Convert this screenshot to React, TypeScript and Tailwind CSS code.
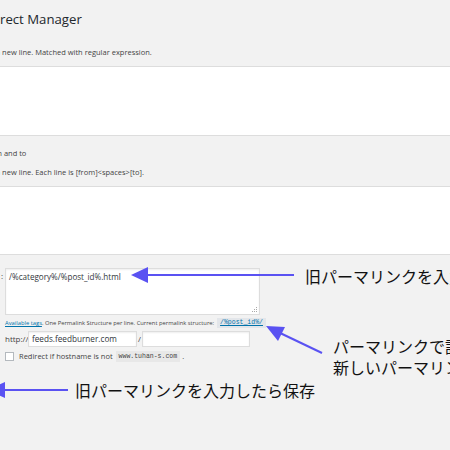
import React from "react";

const jp = "font-['Noto_Sans_CJK_JP',sans-serif]";

function Arrows() {
  return (
    <svg
      className="pointer-events-none absolute left-0 top-0"
      width="450"
      height="450"
      viewBox="0 0 450 450"
    >
      {/* top arrow */}
      <line x1="146" y1="275" x2="294" y2="275" stroke="#5a52f2" strokeWidth="2" />
      <polygon points="131,275 148,267 148,283" fill="#5a52f2" />
      {/* diagonal arrow */}
      <line x1="322" y1="353" x2="278" y2="332" stroke="#5a52f2" strokeWidth="2" />
      <polygon points="266,326 285,327 278,341" fill="#5a52f2" />
      {/* bottom arrow */}
      <line x1="2" y1="390" x2="68" y2="390" stroke="#5a52f2" strokeWidth="2" />
      <polygon points="-12,390 5,382 5,398" fill="#5a52f2" />
    </svg>
  );
}

export default function App() {
  return (
    <div className="relative h-[450px] w-[450px] overflow-hidden bg-[#f2f2f2] font-['Open_Sans',sans-serif] text-[#444]">
      {/* header */}
      <div className="h-[66px]">
        <h1 className="pt-[9px] text-[13.2px] leading-[20px] text-[#23282d]">rect Manager</h1>
        <p className="ml-[-4px] mt-[17px] whitespace-nowrap text-[7.5px] leading-[12px]">
          a new line. Matched with regular expression.
        </p>
      </div>

      <div className="h-[70px] border-y border-[#ddd] bg-white" />

      <div className="h-[50px] pt-[11px] text-[7.5px] leading-[12px]">
        <p className="ml-[-5px] whitespace-nowrap">m and to</p>
        <p className="ml-[-4px] mt-[7px] whitespace-nowrap">
          a new line. Each line is [from]&lt;spaces&gt;[to].
        </p>
      </div>

      <div className="h-[69px] border-y border-[#ddd] bg-white" />

      {/* permalink form */}
      <div className="pt-[13px]">
        <div className="flex">
          <span className="w-[5px] pl-[1px] pt-[3px] text-[8px] leading-[10px]">:</span>
          <div className="relative h-[47px] w-[255px] border border-[#ddd] bg-white px-[3px] pt-[2px] text-[8.1px] leading-[12px] text-[#32373c] shadow-[inset_0_1px_2px_rgba(0,0,0,0.07)]">
            /%category%/%post_id%.html
            <svg className="absolute bottom-[1px] right-[1px]" width="6" height="6" viewBox="0 0 6 6">
              <rect x="4" y="0" width="1" height="1" fill="#aaa" />
              <rect x="2" y="2" width="1" height="1" fill="#aaa" />
              <rect x="4" y="2" width="1" height="1" fill="#aaa" />
              <rect x="0" y="4" width="1" height="1" fill="#aaa" />
              <rect x="2" y="4" width="1" height="1" fill="#aaa" />
              <rect x="4" y="4" width="1" height="1" fill="#aaa" />
            </svg>
          </div>
        </div>

        <div className="mt-[3px] flex h-[10px] items-center pl-[5px] text-[5.8px] leading-[10px] whitespace-nowrap">
          <a className="text-[#0073aa] underline">Available tags</a>
          <span>. One Permalink Structure per line. Current permalink structure:</span>
          <code className="ml-[3px] bg-[#e3e6ea] px-[3px] font-['Liberation_Mono',monospace] text-[6.5px] leading-[10px] text-[#0073aa] underline">
            /%post_id%/
          </code>
        </div>

        <div className="mt-[3px] flex h-[16px] items-center pl-[5px] text-[8px]">
          <span className="w-[23px]">http://</span>
          <div className="flex h-[16px] w-[109px] items-center border border-[#ddd] bg-white px-[3px] text-[8.2px] text-[#32373c] shadow-[inset_0_1px_2px_rgba(0,0,0,0.07)]">
            feeds.feedburner.com
          </div>
          <span className="w-[5px] pl-[1px]">/</span>
          <div className="h-[16px] w-[108px] border border-[#ddd] bg-white shadow-[inset_0_1px_2px_rgba(0,0,0,0.07)]" />
        </div>

        <div className="mt-[4px] flex h-[11px] items-center pl-[5px] text-[7.5px] whitespace-nowrap">
          <span className="h-[9px] w-[9px] border border-[#b4b9be] bg-white" />
          <span className="ml-[5px]">Redirect if hostname is not</span>
          <code className="ml-[3px] bg-[#e8e8e8] px-[3px] font-['Liberation_Mono',monospace] text-[6.5px] leading-[11px]">
            www.tuhan-s.com
          </code>
          <span className="ml-[2px]">.</span>
        </div>
      </div>

      <Arrows />

      {/* annotations */}
      <p className={`absolute left-[305px] top-[265px] whitespace-nowrap text-[16px] leading-[22px] text-[#111] ${jp}`}>
        旧パーマリンクを入力
      </p>
      <div className={`absolute left-[333px] top-[336px] whitespace-nowrap text-[16px] leading-[21px] text-[#111] ${jp}`}>
        <p>パーマリンクで設定した</p>
        <p>新しいパーマリンク</p>
      </div>
      <p className={`absolute left-[75px] top-[379px] whitespace-nowrap text-[16px] leading-[22px] text-[#111] ${jp}`}>
        旧パーマリンクを入力したら保存
      </p>
    </div>
  );
}
